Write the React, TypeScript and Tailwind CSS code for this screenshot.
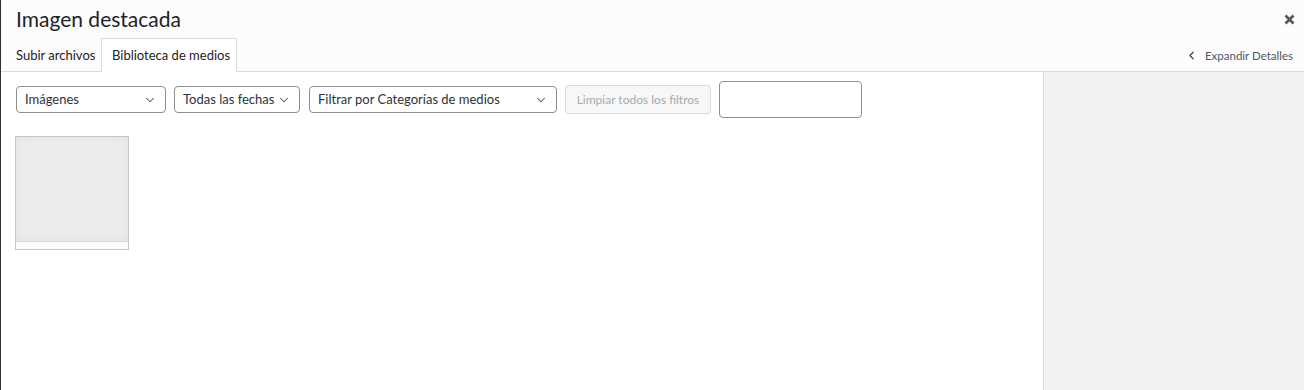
import { ChevronDown, ChevronLeft } from "lucide-react";

const filters = [
  { label: "Imágenes", width: "w-[150px]" },
  { label: "Todas las fechas", width: "w-[126px]" },
  { label: "Filtrar por Categorías de medios", width: "w-[248px]" },
];

function CloseIcon() {
  return (
    <svg width="11" height="11" viewBox="0 0 11 11" className="text-[#50575e]">
      <path d="M1.5 1.5 L9.5 9.5 M9.5 1.5 L1.5 9.5" stroke="currentColor" strokeWidth="2.6" strokeLinecap="butt" />
    </svg>
  );
}

export default function App() {
  return (
    <div className="h-[390px] w-[1304px] overflow-hidden border-l border-[#2c3338] bg-white flex flex-col font-['Lato',sans-serif] text-[#2c3338]">
      {/* header */}
      <div className="h-[72px] shrink-0 bg-[#fcfcfc] border-b border-[#dcdcde] flex flex-col">
        <div className="h-[38px] flex items-center justify-between pl-[15px] pr-[5px]">
          <h1 className="text-[21px] leading-none text-[#1d2327] -mt-[2px]">Imagen destacada</h1>
          <button className="w-[20px] h-[20px] flex items-center justify-center mt-[1px]">
            <CloseIcon />
          </button>
        </div>
        <div className="flex-1 flex items-end justify-between pl-[7px] pr-[11px]">
          <div className="flex items-end -mb-px whitespace-nowrap">
            <span className="h-[33px] w-[93px] pl-[8px] flex items-center text-[13px] text-[#1d2327]">Subir archivos</span>
            <span className="h-[34px] w-[136px] pl-[10px] flex items-center text-[13px] text-[#1d2327] bg-white border border-b-0 border-[#dcdcde]">
              Biblioteca de medios
            </span>
          </div>
          <button className="h-[33px] pt-[2px] flex items-center gap-[7px] text-[11.5px] text-[#50575e] whitespace-nowrap">
            <ChevronLeft size={13} strokeWidth={2.2} className="text-[#3c434a]" />
            Expandir Detalles
          </button>
        </div>
      </div>

      {/* body */}
      <div className="flex-1 flex min-h-0">
        <div className="flex-1 pl-[15px] pt-[9px]">
          <div className="flex items-center h-[37px]">
            {filters.map((f, i) => (
              <div
                key={f.label}
                className={`${f.width} h-[27px] ${i === 1 ? "mr-[9px]" : "mr-[8px]"} border border-[#8c8f94] rounded-[4px] bg-white flex items-center justify-between pl-[8px] pr-[8px] text-[13px] text-[#2c3338] whitespace-nowrap`}
              >
                <span>{f.label}</span>
                <ChevronDown size={14} strokeWidth={1.8} className="text-[#50575e] shrink-0" />
              </div>
            ))}
            <button className="w-[146px] h-[29px] mr-[8px] rounded-[3px] border border-[#dcdcde] bg-[#f6f7f7] text-[12px] text-[#a7aaad] whitespace-nowrap">
              Limpiar todos los filtros
            </button>
            <input className="w-[143px] h-[37px] rounded-[4px] border border-[#8c8f94] bg-white outline-none" />
          </div>

          <div className="mt-[18px] -ml-px w-[114px] h-[114px] border border-[#c3c4c7] bg-[#fafafa] flex flex-col">
            <div className="flex-1 bg-[#ececec] shadow-[inset_0_0_12px_rgba(0,0,0,0.04)] border-b border-[#d6d6d6]" />
            <div className="h-[7px]" />
          </div>
        </div>
        <div className="w-[261px] shrink-0 bg-[#f2f2f2] border-l border-[#dcdcde]" />
      </div>
    </div>
  );
}
